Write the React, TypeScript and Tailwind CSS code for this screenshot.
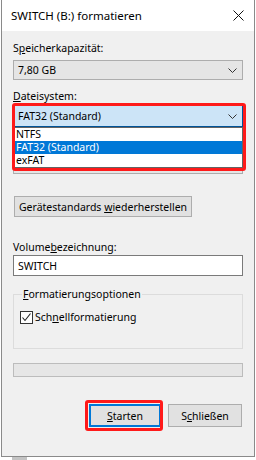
import React from 'react';

const font = { fontFamily: '"Noto Sans", "Open Sans", sans-serif' };

function Chevron() {
  return (
    <svg width="9" height="5" viewBox="0 0 9 5" className="block">
      <polyline points="0.5,0.5 4.5,4.5 8.5,0.5" fill="none" stroke="#333" strokeWidth="1" />
    </svg>
  );
}

function Combo({ text, active = false, h = 'h-[20px]' }: { text: string; active?: boolean; h?: string }) {
  return (
    <div
      className={`${h} flex items-center justify-between pl-[4px] pr-[5px] border ${
        active ? 'bg-[#cce4f7] border-[#005499]' : 'bg-[#e5e5e5] border-[#adadad]'
      }`}
    >
      <span className="leading-[14px]">{text}</span>
      <Chevron />
    </div>
  );
}

function Label({ children, className = '' }: { children: React.ReactNode; className?: string }) {
  return <div className={`h-[16px] leading-[16px] whitespace-nowrap ${className}`}>{children}</div>;
}

export default function App() {
  return (
    <div className="w-[256px] h-[460px] bg-white relative overflow-hidden text-[10.5px] text-black" style={font}>
      <div className="ml-[1px] w-[254px] h-[457px] border-x border-b border-[#8a8a8a] bg-[#f0f0f0] flex flex-col">
        {/* title bar */}
        <div className="h-[31px] bg-white flex items-center justify-between pl-[9px] pr-[10px]">
          <span className="text-[11.5px] leading-[16px]">SWITCH (B:) formatieren</span>
          <svg width="11" height="11" viewBox="0 0 11 11">
            <path d="M0.5 0.5 L10.5 10.5 M10.5 0.5 L0.5 10.5" stroke="#111" strokeWidth="1" />
          </svg>
        </div>

        <div className="flex flex-col px-[11px]">
          <Label className="mt-[9px]">
            S<span className="underline">p</span>eicherkapazität:
          </Label>
          <div className="mt-[4px]">
            <Combo text="7,80 GB" />
          </div>

          <Label className="mt-[8px]">
            <span className="underline">D</span>ateisystem:
          </Label>
          <div className="mt-[1px]">
            <Combo text="FAT32 (Standard)" active h="h-[22px]" />
          </div>

          {/* allocation unit size row, covered by the open list */}
          <div className="mt-[4px] h-[16px]" />
          <div className="mt-[6px] h-[21px] bg-[#e5e5e5] border border-[#adadad]" />

          <div className="mt-[22px] ml-[1px] w-[178px] h-[21px] bg-[#e1e1e1] border border-[#adadad] flex items-center justify-center">
            <span className="leading-[14px] whitespace-nowrap">
              Gerätestandards <span className="underline">w</span>iederherstellen
            </span>
          </div>

          <Label className="mt-[22px]">
            Volume<span className="underline">b</span>ezeichnung:
          </Label>
          <div className="h-[21px] bg-white border border-[#7a7a7a] flex items-center pl-[4px] leading-[14px]">SWITCH</div>

          <div className="relative mt-[18px] h-[55px] border border-[#dcdcdc] pl-[6px] pt-[15px]">
            <span className="absolute left-[8px] -top-[9px] px-[1px] bg-[#f0f0f0] leading-[16px] whitespace-nowrap">
              <span className="underline">F</span>ormatierungsoptionen
            </span>
            <div className="flex items-center gap-[2px]">
              <div className="w-[13px] h-[13px] bg-white border border-[#333] flex items-center justify-center">
                <svg width="11" height="11" viewBox="0 0 11 11">
                  <polyline points="1.5,5.5 4,8.5 9.5,1.5" fill="none" stroke="#222" strokeWidth="1.1" />
                </svg>
              </div>
              <span className="leading-[14px] whitespace-nowrap">
                Sch<span className="underline">n</span>ellformatierung
              </span>
            </div>
          </div>

          <div className="mt-[14px] h-[14px] bg-[#e6e6e6] border border-[#bcbcbc]" />

          <div className="mt-[27px] flex justify-end gap-[7px] pr-[1px]">
            <div className="w-[72px] h-[23px] bg-[#e1e1e1] border-2 border-[#0078d7] flex items-center justify-center">
              <span className="leading-[14px]">
                <span className="underline">S</span>tarten
              </span>
            </div>
            <div className="w-[74px] h-[23px] bg-[#e1e1e1] border border-[#adadad] flex items-center justify-center">
              <span className="leading-[14px]">
                S<span className="underline">c</span>hließen
              </span>
            </div>
          </div>
        </div>
      </div>
      <div className="h-[3px] flex">
        <div className="ml-[12px] w-[15px] bg-[#c4c4c4]" />
      </div>

      {/* open file system list */}
      <div className="absolute left-[14px] top-[127px] w-[229px] bg-white border border-[#646464] flex flex-col">
        <div className="h-[13px] leading-[13px] pl-[1px]">NTFS</div>
        <div className="h-[13px] leading-[13px] pl-[1px] bg-[#0078d7] text-white">FAT32 (Standard)</div>
        <div className="h-[13px] leading-[13px] pl-[1px]">exFAT</div>
      </div>

      {/* red highlight marks */}
      <div className="absolute left-[12px] top-[103px] w-[234px] h-[68px] border-[3px] border-[#ff1a1a] rounded-[3px]" />
      <div className="absolute left-[85px] top-[400px] w-[78px] h-[31px] border-[3px] border-[#ff1a1a] rounded-[3px]" />
    </div>
  );
}
